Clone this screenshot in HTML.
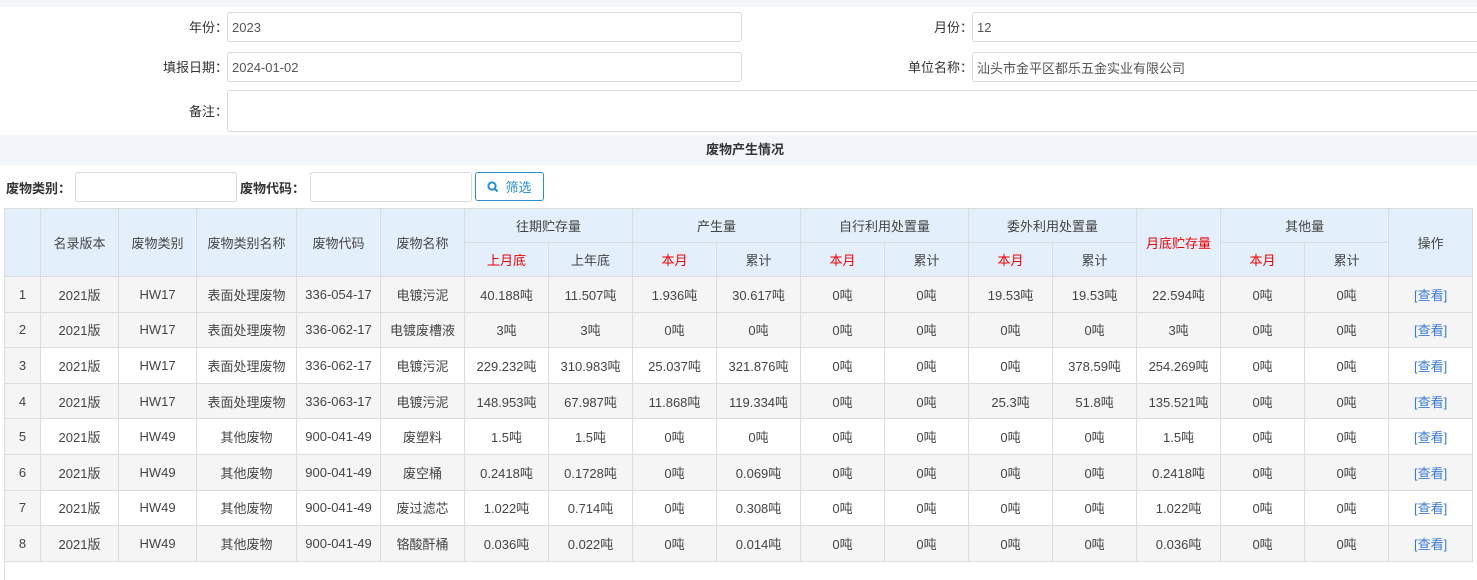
<!DOCTYPE html>
<html><head><meta charset="utf-8"><style>
*{box-sizing:border-box;margin:0;padding:0}
body{width:1477px;height:580px;overflow:hidden;background:#fff;font-family:"Liberation Sans","Noto Sans CJK SC",sans-serif;font-size:13px;color:#333;position:relative}
.a{position:absolute}
.lbl{position:absolute;text-align:right;font-size:13px;color:#333;line-height:16px}
.inp{position:absolute;border:1px solid #d9d9d9;border-radius:3px;background:#fff;padding-left:4px;font-size:13px;color:#555;display:flex;align-items:center}
table{position:absolute;left:4px;top:208px;border-collapse:collapse;table-layout:fixed;width:1468px}
td,th{border:1px solid #dcdcdc;text-align:center;font-size:13px;font-weight:normal;color:#444;white-space:nowrap;overflow:hidden}
th{background:#e3f0fc;height:34px}
td{height:35.6px;background:#f5f5f5}
tr.w td{background:#fff}
tr td:first-child{background:#f5f5f5}
.r{color:#e00}
.lk{color:#3a7ad6}
</style></head><body>
<div class="a" style="left:0;top:0;width:1477px;height:7px;background:#f3f6f9"></div>
<div class="lbl" style="left:100px;top:20px;width:128px">年份：</div>
<div class="inp" style="left:227px;top:12px;width:515px;height:30px">2023</div>
<div class="lbl" style="left:845px;top:20px;width:128px">月份：</div>
<div class="inp" style="left:972px;top:12px;width:510px;height:30px">12</div>
<div class="lbl" style="left:100px;top:60px;width:128px">填报日期：</div>
<div class="inp" style="left:227px;top:52px;width:515px;height:30px">2024-01-02</div>
<div class="lbl" style="left:845px;top:60px;width:128px">单位名称：</div>
<div class="inp" style="left:972px;top:52px;width:510px;height:30px">汕头市金平区都乐五金实业有限公司</div>
<div class="lbl" style="left:100px;top:104px;width:128px">备注：</div>
<div class="inp" style="left:227px;top:90px;width:1260px;height:42px"></div>
<div class="a" style="left:0;top:135px;width:1490px;height:30px;background:#f2f6fa;text-align:center;line-height:30px;font-weight:bold;font-size:13px">废物产生情况</div>
<div class="a" style="left:6px;top:178px;font-weight:bold">废物类别：</div>
<div class="inp" style="left:75px;top:172px;width:162px;height:30px"></div>
<div class="a" style="left:240px;top:178px;font-weight:bold">废物代码：</div>
<div class="inp" style="left:310px;top:172px;width:162px;height:30px"></div>
<div class="a" style="left:475px;top:172px;width:69px;height:29px;border:1px solid #2a8fcf;border-radius:3px;color:#2a8fcf;display:flex;align-items:center;justify-content:center;gap:6px;font-size:13px"><svg width="12" height="12" viewBox="0 0 12 12"><circle cx="5" cy="5" r="3.6" fill="none" stroke="#2a8fcf" stroke-width="2"/><path d="M7.5 7.5L10.5 10.5" stroke="#2a8fcf" stroke-width="2.2"/></svg>筛选</div>
<div class="a" style="left:4px;top:208px;width:1px;height:372px;background:#dcdcdc"></div>
<table>
<colgroup><col style="width:36px"><col style="width:78px"><col style="width:78px"><col style="width:100px"><col style="width:84px"><col style="width:84px"><col style="width:84px"><col style="width:84px"><col style="width:84px"><col style="width:84px"><col style="width:84px"><col style="width:84px"><col style="width:84px"><col style="width:84px"><col style="width:84px"><col style="width:84px"><col style="width:84px"><col style="width:84px"></colgroup>
<tr><th rowspan="2"></th><th rowspan="2">名录版本</th><th rowspan="2">废物类别</th><th rowspan="2">废物类别名称</th><th rowspan="2">废物代码</th><th rowspan="2">废物名称</th><th colspan="2">往期贮存量</th><th colspan="2">产生量</th><th colspan="2">自行利用处置量</th><th colspan="2">委外利用处置量</th><th rowspan="2" class="r">月底贮存量</th><th colspan="2">其他量</th><th rowspan="2">操作</th></tr>
<tr><th class="r">上月底</th><th>上年底</th><th class="r">本月</th><th>累计</th><th class="r">本月</th><th>累计</th><th class="r">本月</th><th>累计</th><th class="r">本月</th><th>累计</th></tr>
<tr><td>1</td><td>2021版</td><td>HW17</td><td>表面处理废物</td><td>336-054-17</td><td>电镀污泥</td><td>40.188吨</td><td>11.507吨</td><td>1.936吨</td><td>30.617吨</td><td>0吨</td><td>0吨</td><td>19.53吨</td><td>19.53吨</td><td>22.594吨</td><td>0吨</td><td>0吨</td><td class="lk">[查看]</td></tr>
<tr><td>2</td><td>2021版</td><td>HW17</td><td>表面处理废物</td><td>336-062-17</td><td>电镀废槽液</td><td>3吨</td><td>3吨</td><td>0吨</td><td>0吨</td><td>0吨</td><td>0吨</td><td>0吨</td><td>0吨</td><td>3吨</td><td>0吨</td><td>0吨</td><td class="lk">[查看]</td></tr>
<tr class="w"><td>3</td><td>2021版</td><td>HW17</td><td>表面处理废物</td><td>336-062-17</td><td>电镀污泥</td><td>229.232吨</td><td>310.983吨</td><td>25.037吨</td><td>321.876吨</td><td>0吨</td><td>0吨</td><td>0吨</td><td>378.59吨</td><td>254.269吨</td><td>0吨</td><td>0吨</td><td class="lk">[查看]</td></tr>
<tr><td>4</td><td>2021版</td><td>HW17</td><td>表面处理废物</td><td>336-063-17</td><td>电镀污泥</td><td>148.953吨</td><td>67.987吨</td><td>11.868吨</td><td>119.334吨</td><td>0吨</td><td>0吨</td><td>25.3吨</td><td>51.8吨</td><td>135.521吨</td><td>0吨</td><td>0吨</td><td class="lk">[查看]</td></tr>
<tr class="w"><td>5</td><td>2021版</td><td>HW49</td><td>其他废物</td><td>900-041-49</td><td>废塑料</td><td>1.5吨</td><td>1.5吨</td><td>0吨</td><td>0吨</td><td>0吨</td><td>0吨</td><td>0吨</td><td>0吨</td><td>1.5吨</td><td>0吨</td><td>0吨</td><td class="lk">[查看]</td></tr>
<tr><td>6</td><td>2021版</td><td>HW49</td><td>其他废物</td><td>900-041-49</td><td>废空桶</td><td>0.2418吨</td><td>0.1728吨</td><td>0吨</td><td>0.069吨</td><td>0吨</td><td>0吨</td><td>0吨</td><td>0吨</td><td>0.2418吨</td><td>0吨</td><td>0吨</td><td class="lk">[查看]</td></tr>
<tr class="w"><td>7</td><td>2021版</td><td>HW49</td><td>其他废物</td><td>900-041-49</td><td>废过滤芯</td><td>1.022吨</td><td>0.714吨</td><td>0吨</td><td>0.308吨</td><td>0吨</td><td>0吨</td><td>0吨</td><td>0吨</td><td>1.022吨</td><td>0吨</td><td>0吨</td><td class="lk">[查看]</td></tr>
<tr><td>8</td><td>2021版</td><td>HW49</td><td>其他废物</td><td>900-041-49</td><td>铬酸酐桶</td><td>0.036吨</td><td>0.022吨</td><td>0吨</td><td>0.014吨</td><td>0吨</td><td>0吨</td><td>0吨</td><td>0吨</td><td>0.036吨</td><td>0吨</td><td>0吨</td><td class="lk">[查看]</td></tr>
</table>
</body></html>
